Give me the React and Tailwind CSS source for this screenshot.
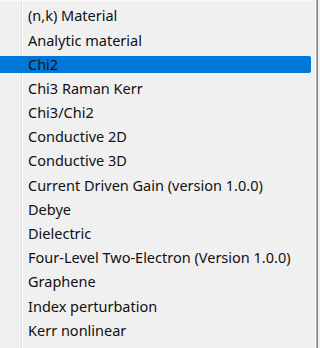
import React from "react";

const items = [
  "(n,k) Material",
  "Analytic material",
  "Chi2",
  "Chi3 Raman Kerr",
  "Chi3/Chi2",
  "Conductive 2D",
  "Conductive 3D",
  "Current Driven Gain (version 1.0.0)",
  "Debye",
  "Dielectric",
  "Four-Level Two-Electron (Version 1.0.0)",
  "Graphene",
  "Index perturbation",
  "Kerr nonlinear",
];

export default function App() {
  return (
    <div className="w-[320px] h-[348px] bg-[#f0f0f0] flex overflow-hidden" style={{ fontFamily: '"Noto Sans", "Open Sans", sans-serif' }}>
      <div className="relative w-[316px] h-full border-t border-t-[#f8f8f8] border-r border-r-white pt-[3px]">
        <div className="absolute left-[21px] top-0 bottom-0 w-px bg-[#e2e2e2]" />
        <div className="absolute left-[22px] top-0 bottom-0 w-px bg-white" />
        <div className="flex flex-col">
          {items.map((t, i) => (
            <div key={t} className="h-[24.2px] flex items-center relative">
              {i === 2 && (
                <div className="absolute left-0 w-[311px] top-[4px] bottom-[4px] bg-[#0078d7] rounded-r-[2px]" />
              )}
              <span className="relative pl-[28px] -mt-[1px] text-[14.5px] leading-none text-[#111] whitespace-nowrap">{t}</span>
            </div>
          ))}
        </div>
      </div>
      <div className="w-px h-full bg-[#a9a9a9]" />
      <div className="w-px h-full bg-[#8a8a8a]" />
      <div className="flex-1 h-full bg-[#f0f0f0]" />
    </div>
  );
}
